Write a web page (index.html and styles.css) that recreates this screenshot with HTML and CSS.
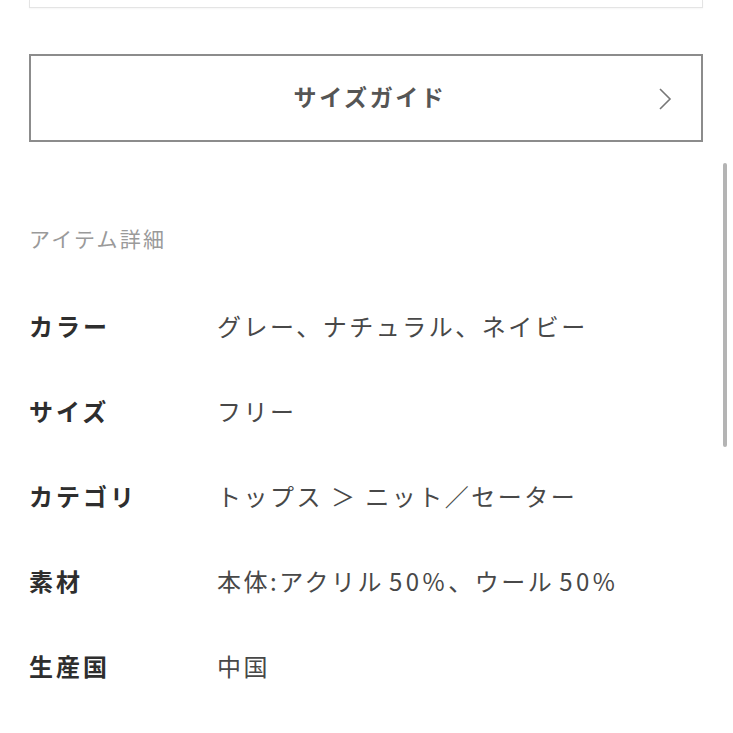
FILE: index.html
```html
<!DOCTYPE html>
<html lang="ja">
<head>
<meta charset="utf-8">
<link rel="stylesheet" href="styles.css">
</head>
<body>
<div class="page">
  <div class="prev-box"></div>
  <a class="guide-btn">
    <span class="guide-label">サイズガイド</span>
    <svg class="chev" viewBox="0 0 16 24" width="16" height="24"><path d="M3 2 L13 12 L3 22" fill="none" stroke="#777" stroke-width="1.6"/></svg>
  </a>
  <h2 class="section-title">アイテム詳細</h2>
  <dl class="details">
    <div class="row"><dt>カラー</dt><dd>グレー、ナチュラル、ネイビー</dd></div>
    <div class="row"><dt>サイズ</dt><dd>フリー</dd></div>
    <div class="row"><dt>カテゴリ</dt><dd>トップス ＞ ニット／セーター</dd></div>
    <div class="row"><dt>素材</dt><dd>本体:アクリル<span class="num">50%</span>、ウール<span class="num">50%</span></dd></div>
    <div class="row"><dt>生産国</dt><dd>中国</dd></div>
  </dl>
</div>
<div class="scrollbar"></div>
</body>
</html>
```
FILE: styles.css
```css
html, body {
  margin: 0;
  padding: 0;
  background: #fff;
}
body {
  font-family: "Noto Sans CJK JP", "Noto Sans", sans-serif;
  width: 733px;
  height: 733px;
  overflow: hidden;
  position: relative;
}
.page {
  padding: 0 30px 0 29px;
}
.prev-box {
  height: 7px;
  border: 1px solid #e4e4e4;
  border-top: none;
  box-shadow: 0 1px 2px rgba(0,0,0,0.04);
}
.guide-btn {
  margin-top: 46px;
  height: 84px;
  border: 2px solid #8c8c8c;
  display: flex;
  align-items: center;
  justify-content: center;
  position: relative;
}
.guide-label {
  font-size: 23px;
  line-height: 30px;
  font-weight: 700;
  color: #555;
  letter-spacing: 2.6px;
  margin: -4px 0 0 8px;
}
.chev {
  position: absolute;
  right: 28px;
  top: 31px;
}
.section-title {
  margin: 81px 0 0 0;
  font-size: 21px;
  line-height: 30px;
  font-weight: 400;
  color: #9a9a9a;
  letter-spacing: 2.2px;
}
.details {
  margin: 30px 0 0 0;
}
.row {
  display: flex;
  align-items: center;
  height: 85px;
}
.row dt {
  width: 188px;
  flex: none;
  font-size: 24px;
  line-height: 30px;
  font-weight: 700;
  color: #2e2e2e;
  letter-spacing: 3px;
}
.row dd {
  margin: 0;
  font-size: 24px;
  line-height: 30px;
  color: #484848;
  letter-spacing: 2.5px;
}
.num {
  letter-spacing: 3.5px;
  margin-left: 5px;
}
.scrollbar {
  position: absolute;
  left: 723px;
  top: 163px;
  width: 4px;
  height: 284px;
  border-radius: 2px;
  background: #b4b4b4;
}
```
